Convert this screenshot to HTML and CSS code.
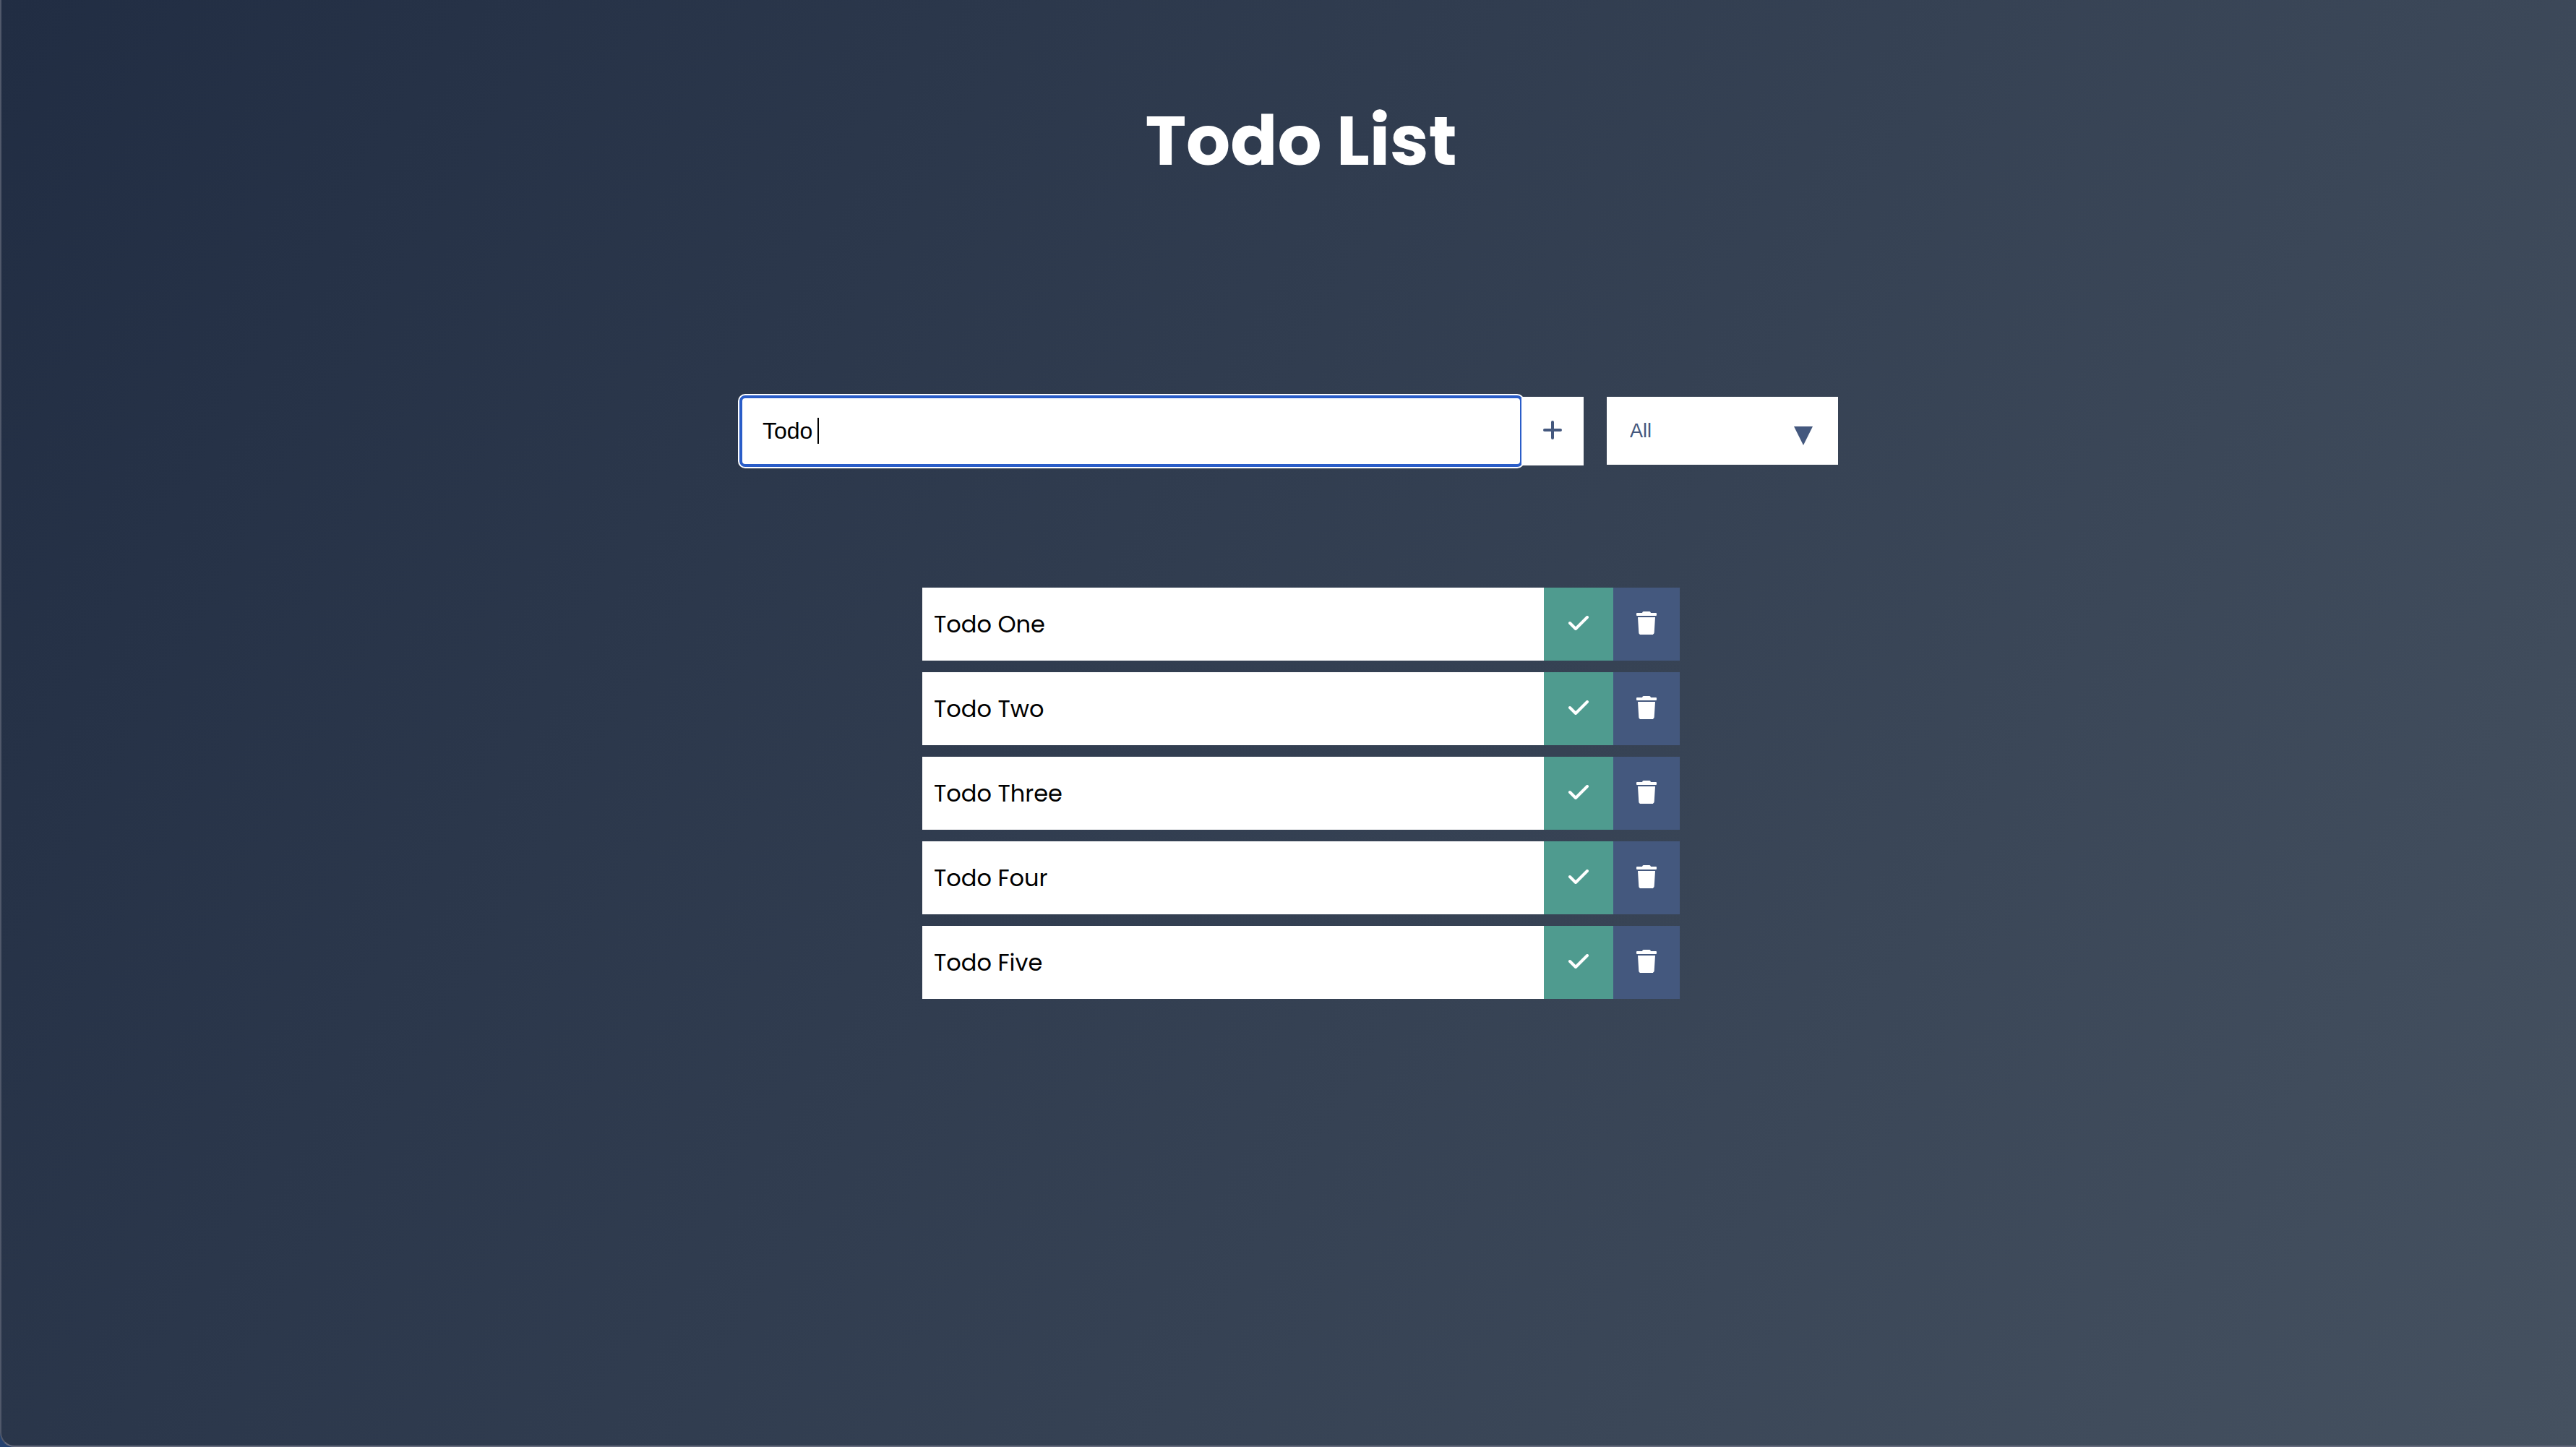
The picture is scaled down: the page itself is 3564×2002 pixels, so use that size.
FILE: index.html
```html
<!DOCTYPE html>
<html lang="en">
<head>
  <meta charset="utf-8">
  <title>Todo List</title>
  <link rel="stylesheet" href="styles.css">
</head>
<body>
  <svg class="symbols" aria-hidden="true">
    <symbol id="check" viewBox="0 0 28 20"><path d="M2 10 L10 18 L26 2" fill="none" stroke="currentColor" stroke-width="4" stroke-linecap="round" stroke-linejoin="round"/></symbol>
    <symbol id="trash" viewBox="0 0 28 32"><path fill="currentColor" d="M1 2H8L8.600 .8Q9 0 10 0H18Q19 0 19.400 .8L20 2H27Q28 2 28 3V5Q28 6 27 6H1Q0 6 0 5V3Q0 2 1 2ZM2 8H26L24.700 29.200Q24.500 32 21.700 32H6.300Q3.500 32 3.300 29.200Z"/></symbol>
  </svg>
  <div class="page">
    <header class="header">
      <h1 class="title">Todo List</h1>
    </header>
    <form class="form">
      <div class="entry">
        <input class="entry-input" type="text" value="Todo " aria-label="New todo">
        <span class="caret"></span>
        <button class="entry-add" type="button" aria-label="Add todo">
          <svg width="26" height="26" viewBox="0 0 26 26"><path d="M13 2V24M2 13H24" stroke="currentColor" stroke-width="4" stroke-linecap="round"/></svg>
        </button>
      </div>
      <div class="filter">
        <select class="filter-select" aria-label="Filter todos">
          <option>All</option>
          <option>Completed</option>
          <option>Uncompleted</option>
        </select>
        <svg class="filter-arrow" width="26" height="26" viewBox="0 0 26 26"><path d="M0 0H26L13 26Z" fill="currentColor"/></svg>
      </div>
    </form>
    <main class="todos">
      <ul class="todo-list">
        <li class="todo"><span class="todo-text">Todo One</span><button class="todo-check" type="button" aria-label="Complete Todo One"><svg width="28" height="20"><use href="#check"/></svg></button><button class="todo-trash" type="button" aria-label="Delete Todo One"><svg width="28" height="32"><use href="#trash"/></svg></button></li>
        <li class="todo"><span class="todo-text">Todo Two</span><button class="todo-check" type="button" aria-label="Complete Todo Two"><svg width="28" height="20"><use href="#check"/></svg></button><button class="todo-trash" type="button" aria-label="Delete Todo Two"><svg width="28" height="32"><use href="#trash"/></svg></button></li>
        <li class="todo"><span class="todo-text">Todo Three</span><button class="todo-check" type="button" aria-label="Complete Todo Three"><svg width="28" height="20"><use href="#check"/></svg></button><button class="todo-trash" type="button" aria-label="Delete Todo Three"><svg width="28" height="32"><use href="#trash"/></svg></button></li>
        <li class="todo"><span class="todo-text">Todo Four</span><button class="todo-check" type="button" aria-label="Complete Todo Four"><svg width="28" height="20"><use href="#check"/></svg></button><button class="todo-trash" type="button" aria-label="Delete Todo Four"><svg width="28" height="32"><use href="#trash"/></svg></button></li>
        <li class="todo"><span class="todo-text">Todo Five</span><button class="todo-check" type="button" aria-label="Complete Todo Five"><svg width="28" height="20"><use href="#check"/></svg></button><button class="todo-trash" type="button" aria-label="Delete Todo Five"><svg width="28" height="32"><use href="#trash"/></svg></button></li>
      </ul>
    </main>
  </div>
</body>
</html>
```
FILE: styles.css
```css
* {
  box-sizing: border-box;
  margin: 0;
  padding: 0;
}

body {
  background: #24416f;
  color: #fff;
  font-family: Poppins, Inter, sans-serif;
}

.symbols {
  display: none;
}

.page {
  display: flex;
  flex-direction: column;
  min-height: 100vh;
  padding-left: 2px;
  border-left: 2px solid #50586a;
  border-bottom: 2px solid #676c7e;
  border-bottom-left-radius: 20px;
  background: linear-gradient(120deg, #212d43 0%, #455160 100%);
}

.header {
  display: flex;
  justify-content: center;
  padding: 123px 0 0 32px;
}

.title {
  font-size: 96px;
  font-weight: 700;
  line-height: 144px;
}

.form {
  display: flex;
  justify-content: center;
  align-items: flex-start;
  gap: 32px;
  padding-top: 282px;
}

.entry {
  position: relative;
  display: flex;
  width: 1166px;
  height: 95px;
}

.entry-input {
  flex: 1;
  min-width: 0;
  padding: 0 30px;
  border: 0;
  border-radius: 6px;
  outline: 4px solid #2a5dc8;
  outline-offset: -2px;
  box-shadow: 0 0 0 4px #fff;
  background: #fff;
  color: #000;
  caret-color: transparent;
  font: 32px "Liberation Sans", Arial, sans-serif;
}

.caret {
  position: absolute;
  left: 106px;
  top: 29px;
  width: 2px;
  height: 36px;
  background: #000;
}

.entry-add {
  position: relative;
  z-index: 1;
  display: flex;
  align-items: center;
  justify-content: center;
  width: 86px;
  padding-bottom: 3px;
  border: 0;
  background: #fff;
  color: #44587e;
}

.filter {
  position: relative;
  width: 320px;
  height: 94px;
}

.filter-select {
  width: 100%;
  height: 100%;
  padding: 0 32px;
  border: 0;
  border-radius: 0;
  appearance: none;
  background: #fff;
  color: #44587e;
  font: 27px "Liberation Sans", Arial, sans-serif;
}

.filter-arrow {
  position: absolute;
  right: 35px;
  top: 41px;
  color: #44587e;
  pointer-events: none;
}

.todos {
  display: flex;
  justify-content: center;
  padding: 169px 0 64px 32px;
}

.todo-list {
  display: flex;
  flex-direction: column;
  gap: 16px;
  width: 1048px;
  list-style: none;
}

.todo {
  display: flex;
  height: 101px;
  background: #fff;
  color: #000;
  font-size: 32px;
}

.todo-text {
  flex: 1;
  padding-left: 16px;
  line-height: 101px;
}

.todo-check,
.todo-trash {
  display: flex;
  align-items: center;
  justify-content: center;
  padding-bottom: 4px;
  border: 0;
  color: #fff;
}

.todo-check {
  width: 96px;
  background: #4f9b8f;
}

.todo-trash {
  width: 92px;
  background: #44587e;
}
```
